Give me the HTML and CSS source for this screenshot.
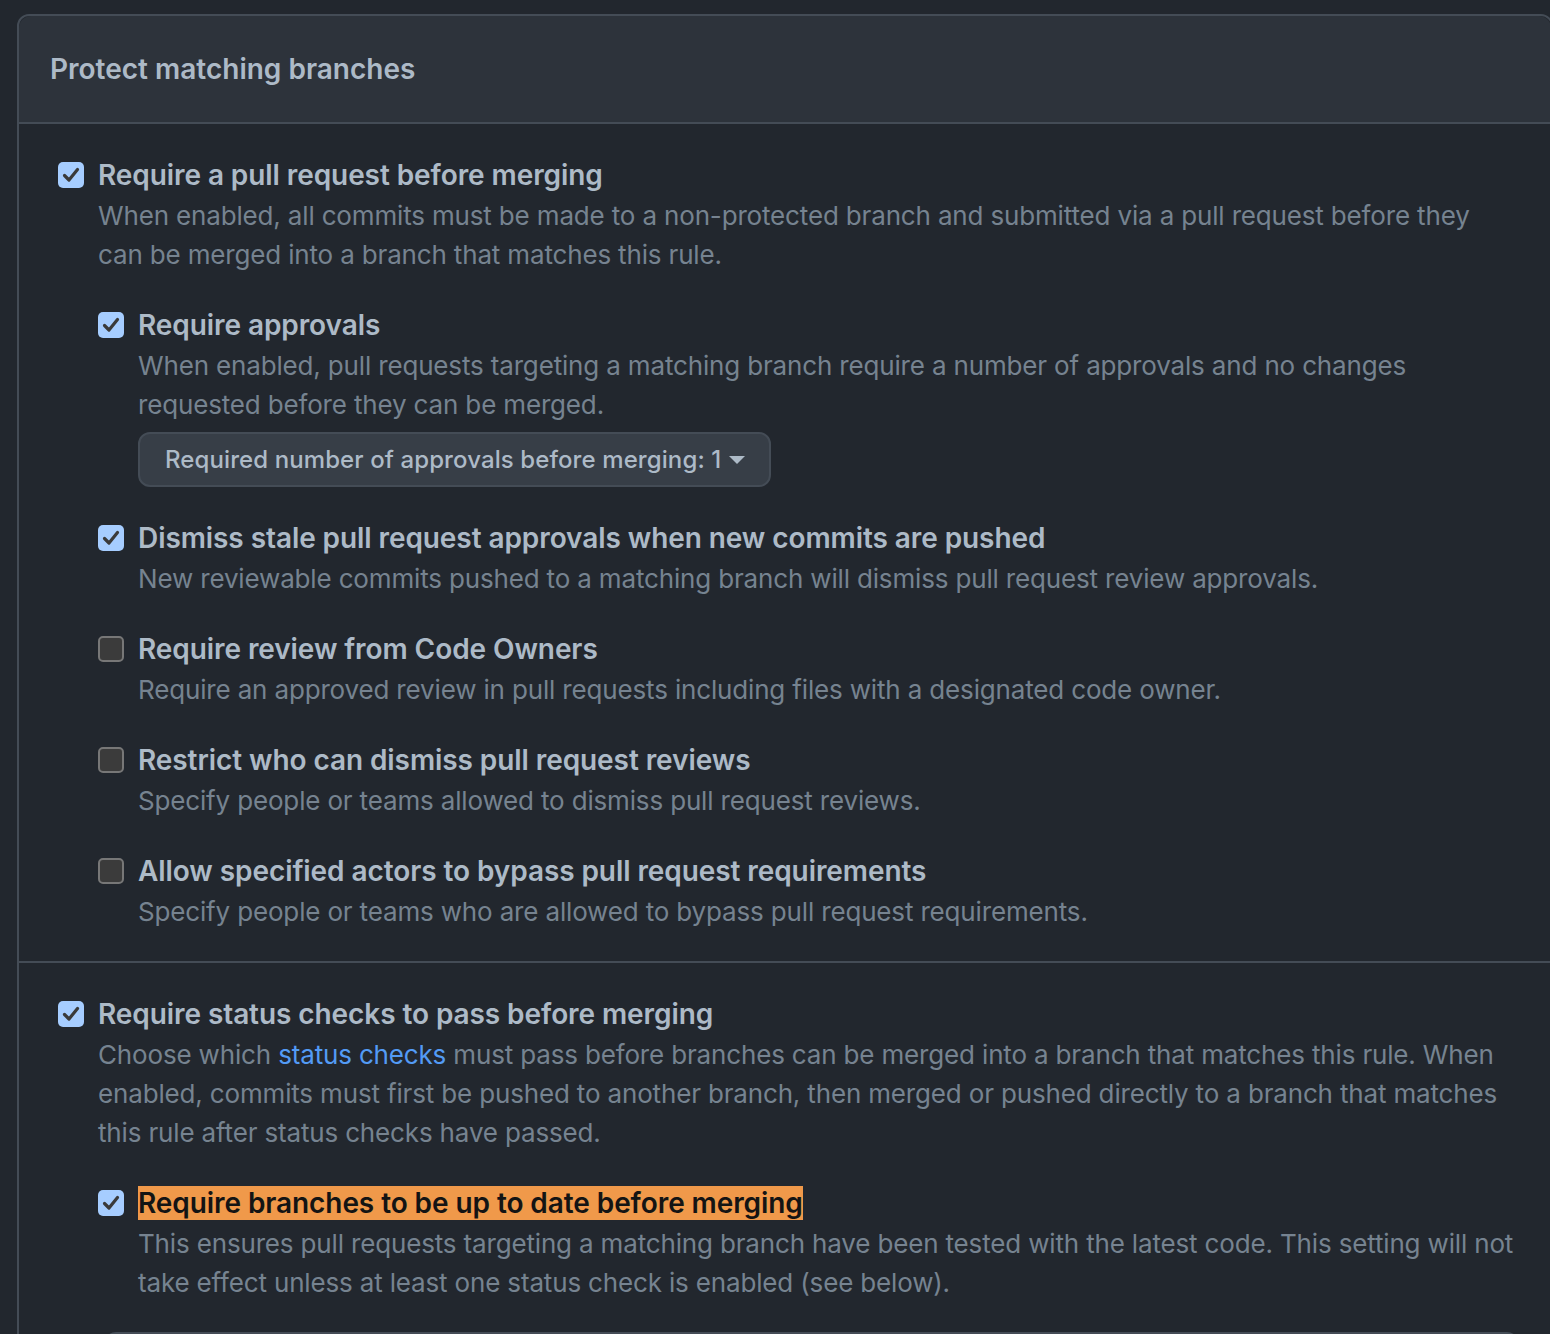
FILE: index.html
```html
<!DOCTYPE html>
<html lang="en">
<head>
<meta charset="utf-8">
<title>Protect matching branches</title>
<link rel="stylesheet" href="styles.css">
</head>
<body>
<div class="page">
  <div class="box">
    <div class="box-header">
      <h2 class="box-title">Protect matching branches</h2>
    </div>

    <div class="box-row">
      <div class="item">
        <span class="cb checked"><svg viewBox="0 0 26 26" width="26" height="26"><path d="M6.5 13.5 L11 18 L19.5 7.5" fill="none" stroke="#3a3a3a" stroke-width="3.2" stroke-linecap="round" stroke-linejoin="round"/></svg></span>
        <div class="content">
          <div class="title">Require a pull request before merging</div>
          <div class="desc">When enabled, all commits must be made to a non-protected branch and submitted via a pull request before they can be merged into a branch that matches this rule.</div>

          <div class="item sub">
            <span class="cb checked"><svg viewBox="0 0 26 26" width="26" height="26"><path d="M6.5 13.5 L11 18 L19.5 7.5" fill="none" stroke="#3a3a3a" stroke-width="3.2" stroke-linecap="round" stroke-linejoin="round"/></svg></span>
            <div class="content">
              <div class="title">Require approvals</div>
              <div class="desc">When enabled, pull requests targeting a matching branch require a number of approvals and no changes requested before they can be merged.</div>
              <button class="dropdown" type="button">Required number of approvals before merging: 1<span class="caret"></span></button>
            </div>
          </div>

          <div class="item sub">
            <span class="cb checked"><svg viewBox="0 0 26 26" width="26" height="26"><path d="M6.5 13.5 L11 18 L19.5 7.5" fill="none" stroke="#3a3a3a" stroke-width="3.2" stroke-linecap="round" stroke-linejoin="round"/></svg></span>
            <div class="content">
              <div class="title">Dismiss stale pull request approvals when new commits are pushed</div>
              <div class="desc">New reviewable commits pushed to a matching branch will dismiss pull request review approvals.</div>
            </div>
          </div>

          <div class="item sub">
            <span class="cb"></span>
            <div class="content">
              <div class="title">Require review from Code Owners</div>
              <div class="desc">Require an approved review in pull requests including files with a designated code owner.</div>
            </div>
          </div>

          <div class="item sub">
            <span class="cb"></span>
            <div class="content">
              <div class="title">Restrict who can dismiss pull request reviews</div>
              <div class="desc">Specify people or teams allowed to dismiss pull request reviews.</div>
            </div>
          </div>

          <div class="item sub">
            <span class="cb"></span>
            <div class="content">
              <div class="title">Allow specified actors to bypass pull request requirements</div>
              <div class="desc">Specify people or teams who are allowed to bypass pull request requirements.</div>
            </div>
          </div>
        </div>
      </div>
    </div>

    <div class="box-row">
      <div class="item">
        <span class="cb checked"><svg viewBox="0 0 26 26" width="26" height="26"><path d="M6.5 13.5 L11 18 L19.5 7.5" fill="none" stroke="#3a3a3a" stroke-width="3.2" stroke-linecap="round" stroke-linejoin="round"/></svg></span>
        <div class="content">
          <div class="title">Require status checks to pass before merging</div>
          <div class="desc">Choose which <a class="link" href="#">status checks</a> must pass before branches can be merged into a branch that matches this rule. When enabled, commits must first be pushed to another branch, then merged or pushed directly to a branch that matches this rule after status checks have passed.</div>

          <div class="item sub">
            <span class="cb checked"><svg viewBox="0 0 26 26" width="26" height="26"><path d="M6.5 13.5 L11 18 L19.5 7.5" fill="none" stroke="#3a3a3a" stroke-width="3.2" stroke-linecap="round" stroke-linejoin="round"/></svg></span>
            <div class="content">
              <div class="title"><span class="highlight">Require branches to be up to date before merging</span></div>
              <div class="desc">This ensures pull requests targeting a matching branch have been tested with the latest code. This setting will not take effect unless at least one status check is enabled (see below).</div>
            </div>
          </div>
          <div class="search-box"></div>
        </div>
      </div>
    </div>
  </div>
</div>
</body>
</html>
```

FILE: styles.css
```css
html, body {
  margin: 0;
  padding: 0;
  background: #22272e;
  overflow: hidden;
}

body {
  font-family: Inter, "Noto Sans", "Liberation Sans", sans-serif;
  color: #adbac7;
  -webkit-font-smoothing: antialiased;
}

.page {
  padding: 14px 0 0 17px;
  height: 1334px;
  box-sizing: border-box;
}

.box {
  width: 1536px;
  border: 2px solid #444c56;
  border-radius: 12px;
  background: #22272e;
  box-sizing: border-box;
}

.box-header {
  background: #2d333b;
  border-bottom: 2px solid #444c56;
  border-radius: 12px 12px 0 0;
  padding: 32px 32px 32px 31px;
}

.box-title {
  margin: 0;
  font-size: 28px;
  line-height: 42px;
  font-weight: 600;
  color: #adbac7;
}

.box-row {
  padding: 30px 32px 30px 39px;
}

.box-row + .box-row {
  border-top: 2px solid #444c56;
}

.item {
  display: flex;
  gap: 14px;
  align-items: flex-start;
}

.item.sub {
  margin-top: 30px;
}

.content {
  flex: 1;
  min-width: 0;
}

.cb {
  flex: none;
  width: 26px;
  height: 26px;
  margin-top: 8px;
  box-sizing: border-box;
  border-radius: 5px;
  background: #3b3b3b;
  border: 2px solid #777777;
  display: block;
}

.cb.checked {
  background: #a6cdff;
  border: none;
}

.cb svg {
  display: block;
}

.title {
  font-size: 28px;
  line-height: 42px;
  font-weight: 600;
  letter-spacing: -0.08px;
  color: #adbac7;
}

.desc {
  font-size: 26px;
  line-height: 39px;
  font-weight: 400;
  letter-spacing: -0.16px;
  color: #768390;
}

.link {
  color: #539bf5;
  text-decoration: none;
}

.highlight {
  background: #f0994a;
  color: #141414;
}

.dropdown {
  display: inline-flex;
  align-items: center;
  margin-top: 8px;
  height: 55px;
  padding: 0 24px 0 25px;
  border: 2px solid #444c56;
  border-radius: 12px;
  background: #373e47;
  color: #adbac7;
  font-family: Inter, "Noto Sans", "Liberation Sans", sans-serif;
  font-size: 24px;
  font-weight: 500;
  letter-spacing: 0.1px;
  box-sizing: border-box;
}

.caret {
  display: inline-block;
  width: 0;
  height: 0;
  margin-left: 8px;
  border-left: 8px solid transparent;
  border-right: 8px solid transparent;
  border-top: 8px solid #adbac7;
}

.search-box {
  margin-top: 30px;
  margin-left: 6px;
  height: 60px;
  border: 2px solid #444c56;
  border-radius: 12px;
}
```
